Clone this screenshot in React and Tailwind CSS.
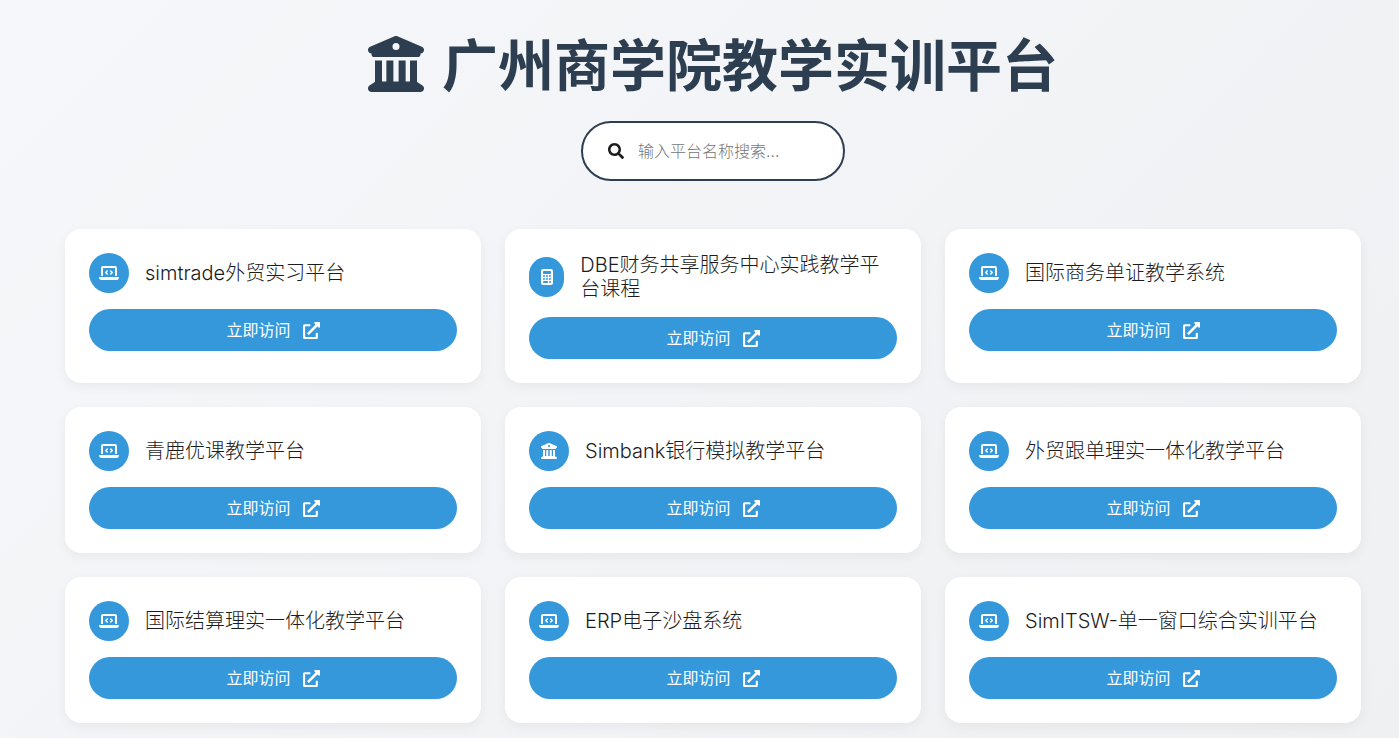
import { FaBuildingColumns, FaLaptopCode, FaCalculator } from "react-icons/fa6";
import { FaSearch, FaExternalLinkAlt } from "react-icons/fa";

const PLATFORMS = [
  { name: "simtrade外贸实习平台", icon: FaLaptopCode },
  { name: "DBE财务共享服务中心实践教学平台课程", icon: FaCalculator },
  { name: "国际商务单证教学系统", icon: FaLaptopCode },
  { name: "青鹿优课教学平台", icon: FaLaptopCode },
  { name: "Simbank银行模拟教学平台", icon: FaBuildingColumns },
  { name: "外贸跟单理实一体化教学平台", icon: FaLaptopCode },
  { name: "国际结算理实一体化教学平台", icon: FaLaptopCode },
  { name: "ERP电子沙盘系统", icon: FaLaptopCode },
  { name: "SimITSW-单一窗口综合实训平台", icon: FaLaptopCode },
];

function PlatformCard({ name, icon: Icon }) {
  return (
    <div className="bg-white rounded-2xl p-6 shadow-[0_4px_12px_rgba(0,0,0,0.05)]">
      <div className="flex items-center mb-4">
        <div className="w-10 h-10 rounded-full bg-[#3498db] text-white flex items-center justify-center mr-4">
          <Icon className={Icon === FaLaptopCode ? "w-5 h-4" : "w-4 h-4"} />
        </div>
        <h3 className="text-[20px] leading-6 font-light text-[#1c1c1c]">{name}</h3>
      </div>
      <a className="h-[42px] rounded-[21px] bg-[#3498db] text-white flex items-center justify-center gap-3 text-base">
        立即访问 <FaExternalLinkAlt size={17} />
      </a>
    </div>
  );
}

export default function App() {
  return (
    <div
      className="min-h-screen bg-[linear-gradient(135deg,#f5f7fa,#eff0f2)] pb-[15px] pl-[65px] pr-[38px]"
      style={{ fontFamily: 'Inter, "Noto Sans CJK SC", sans-serif' }}
    >
      <h1 className="pt-[26px] flex items-center justify-center gap-[18px] text-[56px] leading-[80px] font-bold text-[#2c3e50]">
        <FaBuildingColumns size={56} className="-mt-1" />
        广州商学院教学实训平台
      </h1>

      <div className="mt-[15px] flex justify-center">
        <div className="w-[264px] h-[60px] rounded-[30px] border-2 border-[#2c3e50] bg-white flex items-center pl-[25px] gap-[14px]">
          <FaSearch size={16} className="text-[#1c1c1c]" />
          <input
            placeholder="输入平台名称搜索..."
            className="flex-1 min-w-0 text-base font-light outline-none placeholder:text-[#757575]"
          />
        </div>
      </div>

      <div className="mt-[48px] grid grid-cols-3 gap-6">
        {PLATFORMS.map((p) => (
          <PlatformCard key={p.name} name={p.name} icon={p.icon} />
        ))}
      </div>
    </div>
  );
}
